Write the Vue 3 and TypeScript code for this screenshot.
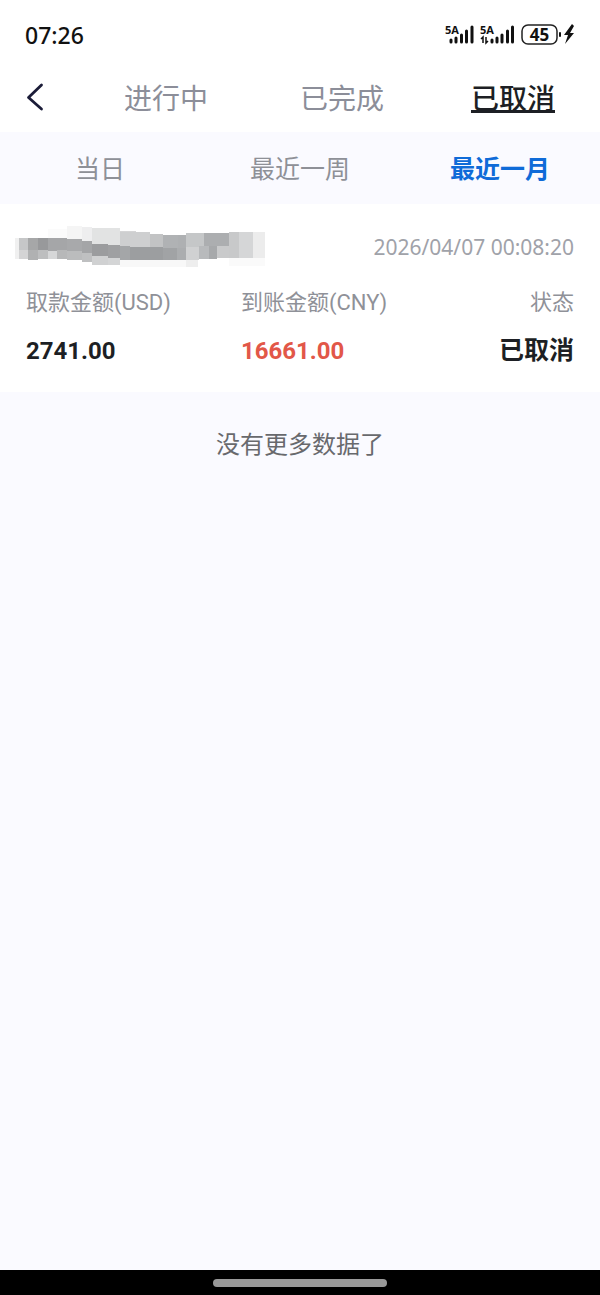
<script setup lang="ts">
import { ref } from 'vue'

interface Option {
  id: string
  label: string
}

interface Block {
  x: number
  y: number
  w: number
  h: number
  c: string
}

const tabs: Option[] = [
  { id: 'pending', label: '进行中' },
  { id: 'done', label: '已完成' },
  { id: 'cancelled', label: '已取消' },
]
const ranges: Option[] = [
  { id: 'day', label: '当日' },
  { id: 'week', label: '最近一周' },
  { id: 'month', label: '最近一月' },
]
const activeTab = ref('cancelled')
const activeRange = ref('month')

const record = {
  time: '2026/04/07 00:08:20',
  usd: '2741.00',
  cny: '16661.00',
  status: '已取消',
}

// Mosaic that hides the order number
const mosaic: Block[] = [
  { x: 48, y: 14, w: 22, h: 10, c: '#fbfbfb' },
  { x: 67, y: 11, w: 15, h: 14, c: '#f5f5f5' },
  { x: 82, y: 12, w: 10, h: 14, c: '#eeeeef' },
  { x: 92, y: 13, w: 28, h: 18, c: '#e2e3e3' },
  { x: 120, y: 16, w: 16, h: 16, c: '#d5d5d6' },
  { x: 120, y: 45, w: 67, h: 7, c: '#f8f8f8' },
  { x: 15, y: 23, w: 4, h: 21, c: '#f0f0f0' },
  { x: 19, y: 23, w: 9, h: 12, c: '#c6c7c8' },
  { x: 19, y: 35, w: 9, h: 9, c: '#d4d4d5' },
  { x: 28, y: 23, w: 10, h: 12, c: '#a6a7a8' },
  { x: 28, y: 35, w: 10, h: 10, c: '#b0b1b2' },
  { x: 38, y: 23, w: 10, h: 12, c: '#98999b' },
  { x: 38, y: 35, w: 10, h: 9, c: '#bdbebf' },
  { x: 48, y: 23, w: 19, h: 13, c: '#a5a6a8' },
  { x: 48, y: 36, w: 9, h: 8, c: '#d6d7d8' },
  { x: 57, y: 35, w: 10, h: 9, c: '#b7b8b9' },
  { x: 67, y: 24, w: 15, h: 13, c: '#a8a9ab' },
  { x: 67, y: 36, w: 15, h: 9, c: '#bbbcbd' },
  { x: 82, y: 26, w: 10, h: 12, c: '#a4a5a7' },
  { x: 82, y: 38, w: 10, h: 9, c: '#bfc0c1' },
  { x: 92, y: 29, w: 16, h: 13, c: '#9b9c9e' },
  { x: 92, y: 41, w: 16, h: 9, c: '#d0d1d2' },
  { x: 108, y: 30, w: 12, h: 13, c: '#9fa0a2' },
  { x: 108, y: 43, w: 12, h: 7, c: '#d4d5d6' },
  { x: 120, y: 17, w: 30, h: 15, c: '#cecfd0' },
  { x: 150, y: 19, w: 13, h: 14, c: '#c2c3c4' },
  { x: 163, y: 20, w: 15, h: 13, c: '#b0b2b4' },
  { x: 178, y: 20, w: 8, h: 13, c: '#aeb0b2' },
  { x: 120, y: 31, w: 10, h: 14, c: '#a4a6a8' },
  { x: 130, y: 32, w: 33, h: 13, c: '#9c9ea0' },
  { x: 163, y: 33, w: 14, h: 12, c: '#a1a3a5' },
  { x: 177, y: 33, w: 9, h: 12, c: '#abadaf' },
  { x: 186, y: 18, w: 18, h: 14, c: '#c5c7c8' },
  { x: 186, y: 32, w: 13, h: 13, c: '#d0d1d2' },
  { x: 186, y: 45, w: 12, h: 7, c: '#eeeeee' },
  { x: 199, y: 31, w: 10, h: 13, c: '#b8babc' },
  { x: 204, y: 18, w: 25, h: 13, c: '#acaeb0' },
  { x: 209, y: 31, w: 8, h: 13, c: '#a7a9ab' },
  { x: 217, y: 31, w: 12, h: 12, c: '#c9cacb' },
  { x: 229, y: 17, w: 10, h: 26, c: '#c8c9ca' },
  { x: 239, y: 17, w: 14, h: 26, c: '#d5d6d7' },
  { x: 253, y: 17, w: 12, h: 26, c: '#ececec' },
  { x: 229, y: 43, w: 36, h: 8, c: '#fafafa' },
]
</script>

<template>
  <div class="page">
    <div class="status-bar">
      <span class="clock">07:26</span>
      <svg class="indicators" width="130" height="24" viewBox="0 0 130 24" aria-label="5A 5A 45">
        <g class="net">
          <text x="0" y="11">5A</text>
          <text x="35" y="11">5A</text>
        </g>
        <g stroke="#111" stroke-width="3" stroke-linecap="round">
          <path d="M6 19v-2M11 19v-4M16.500 19v-7M21.500 19v-11M27 19v-15" />
          <path d="M47 19v-2M52 19v-4M57 19v-7M62.500 19v-11M67.500 19v-15" />
        </g>
        <path d="M36 16l2-2v6M43 18l-2 2v-6" fill="none" stroke="#111" stroke-width="1.500" />
        <rect x="77" y="2" width="35" height="19" rx="6" fill="none" stroke="#222" stroke-width="1.500" />
        <text class="level" x="94.500" y="18" text-anchor="middle">45</text>
        <rect x="114" y="9" width="2" height="5" rx="1" fill="#111" />
        <path d="M127 1L119 12h4l-3 9 9-11h-4l4-7z" fill="#111" />
      </svg>
    </div>

    <header class="header">
      <button class="back" type="button" aria-label="返回">
        <svg width="18" height="28" viewBox="0 0 18 28">
          <path d="M15.500 2L2.500 14.500L15.500 26" fill="none" stroke="#1b1c38" stroke-width="2.800" stroke-linecap="round" stroke-linejoin="round" />
        </svg>
      </button>
      <button
        v-for="tab in tabs"
        :key="tab.id"
        type="button"
        class="tab"
        :class="{ active: activeTab === tab.id }"
        @click="activeTab = tab.id"
      >
        {{ tab.label }}
      </button>
    </header>

    <nav class="ranges">
      <button
        v-for="range in ranges"
        :key="range.id"
        type="button"
        class="range"
        :class="{ active: activeRange === range.id }"
        @click="activeRange = range.id"
      >
        {{ range.label }}
      </button>
    </nav>

    <main class="content">
      <article class="record">
        <div class="record-head">
          <svg class="mosaic" width="270" height="56" viewBox="0 0 270 56" shape-rendering="crispEdges" aria-hidden="true">
            <rect v-for="(b, i) in mosaic" :key="i" :x="b.x" :y="b.y" :width="b.w" :height="b.h" :fill="b.c" />
          </svg>
          <time>{{ record.time }}</time>
        </div>
        <dl class="fields">
          <div class="field">
            <dt>取款金额(USD)</dt>
            <dd>{{ record.usd }}</dd>
          </div>
          <div class="field">
            <dt>到账金额(CNY)</dt>
            <dd class="red">{{ record.cny }}</dd>
          </div>
          <div class="field end">
            <dt>状态</dt>
            <dd class="state">{{ record.status }}</dd>
          </div>
        </dl>
      </article>
      <p class="empty">没有更多数据了</p>
    </main>

    <footer class="system-nav"><span class="pill"></span></footer>
  </div>
</template>

<style>
body {
  margin: 0;
}
</style>

<style scoped>
.page {
  min-height: 100vh;
  display: flex;
  flex-direction: column;
  background: #fafaff;
  font-family: Roboto, "Noto Sans CJK SC", sans-serif;
  color: #1d1f24;
}

button {
  border: 0;
  padding: 0;
  background: none;
  font-family: inherit;
  cursor: pointer;
}

.status-bar {
  display: flex;
  align-items: center;
  justify-content: space-between;
  height: 62px;
  padding: 8px 25px 0;
  box-sizing: border-box;
  background: #fff;
}

.clock {
  font: 500 23px/32px "Noto Sans", sans-serif;
  color: #111;
}

.indicators {
  display: block;
}

.net {
  font: 700 11px "Noto Sans", sans-serif;
  fill: #111;
}

.level {
  font: 700 17px "Noto Sans", sans-serif;
  fill: #111;
}

.header {
  display: grid;
  grid-template-columns: 78px 176fr 176fr 166fr;
  height: 70px;
  padding-right: 4px;
  background: #fff;
}

.back {
  display: flex;
  align-items: center;
  padding-left: 26px;
}

.tab {
  padding-top: 6px;
  font-size: 28px;
  line-height: 40px;
  color: #8c8e99;
}

.tab.active {
  font-weight: 500;
  color: #1d1f24;
  text-decoration: underline;
  text-decoration-thickness: 3px;
  text-underline-offset: 1px;
  text-decoration-skip-ink: none;
}

.ranges {
  display: grid;
  grid-template-columns: repeat(3, 1fr);
  height: 72px;
}

.range {
  padding-top: 4px;
  font-size: 25px;
  line-height: 36px;
  color: #8e9097;
}

.range.active {
  font-weight: 700;
  color: #0f6bd8;
}

.content {
  flex: 1;
}

.record {
  padding: 11px 26px 23px;
  background: #fff;
}

.record-head {
  display: flex;
  align-items: center;
  justify-content: space-between;
}

.mosaic {
  display: block;
  margin-left: -26px;
}

time {
  font-family: "Noto Sans", sans-serif;
  font-size: 21px;
  line-height: 32px;
  padding-top: 8px;
  color: #a0a2a9;
}

.fields {
  display: grid;
  grid-template-columns: 215fr 215fr 118fr;
  margin: 16px 0 0;
}

.field.end {
  text-align: right;
}

dt {
  font-size: 22px;
  line-height: 32px;
  color: #8f9198;
}

dd {
  margin: 14px 0 0;
  font-size: 24px;
  font-weight: 700;
  line-height: 36px;
}

dd.red {
  color: #e25748;
}

dd.state {
  font-size: 25px;
}

.empty {
  margin: 35px 0 0;
  text-align: center;
  font-size: 24px;
  line-height: 36px;
  color: #68696d;
}

.system-nav {
  display: flex;
  align-items: center;
  justify-content: center;
  height: 25px;
  background: #000;
}

.pill {
  width: 29%;
  height: 8px;
  border-radius: 4px;
  background: #999;
}
</style>
